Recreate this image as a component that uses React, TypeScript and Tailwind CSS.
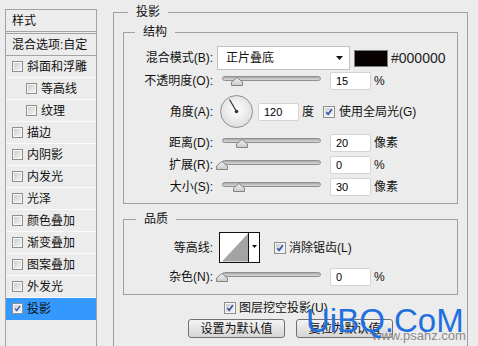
import React from 'react';

const FONT = "font-['Liberation_Sans','Noto_Sans_CJK_SC',sans-serif]";

function Check({ checked, big }: { checked?: boolean; big?: boolean }) {
  return (
    <span
      className={`${big ? 'w-[12px] h-[12px]' : 'w-[11px] h-[11px]'} shrink-0 flex border border-[#8e8f8f] bg-[#f6f6f6] p-[1px]`}
    >
      <span className="relative flex-1 bg-gradient-to-br from-[#cfcfcf] to-[#f3f3f3]">
        {checked && (
          <svg className="absolute inset-0" viewBox="0 0 8 8" width="100%" height="100%">
            <path d="M1.3 4.2 L3.2 6.3 L6.8 1.3" fill="none" stroke="#2b4aa8" strokeWidth="1.5" />
          </svg>
        )}
      </span>
    </span>
  );
}

function Slider({ pos }: { pos: number }) {
  return (
    <div className="relative w-[99px] h-[12px] ml-[9px] shrink-0">
      <div className="mt-[1px] h-[5px] rounded-full border border-[#8f8f8f] bg-gradient-to-b from-[#a9a9a9] to-[#dadada]" />
      <svg className="absolute top-[2px]" style={{ left: pos }} width="12" height="9" viewBox="0 0 12 9">
        <defs>
          <linearGradient id="thumbg" x1="0" y1="0" x2="0" y2="1">
            <stop offset="0" stopColor="#f2f2f2" />
            <stop offset="1" stopColor="#c9c9c9" />
          </linearGradient>
        </defs>
        <path d="M6 0.5 L11.5 5 L11.5 8.5 L0.5 8.5 L0.5 5 Z" fill="url(#thumbg)" stroke="#858585" strokeWidth="1" />
      </svg>
    </div>
  );
}

function Field({ v, ml = 'ml-[9px]' }: { v: string; ml?: string }) {
  return (
    <div
      className={`${ml} w-[41px] h-[18px] shrink-0 bg-white border border-[#d4d4d4] rounded-[2px] pl-[5px] text-[11px] leading-[16px] text-black`}
    >
      {v}
    </div>
  );
}

function Label({ children }: { children: React.ReactNode }) {
  return <div className="w-[89px] shrink-0 text-right text-[12px] leading-[16px] text-[#111]">{children}</div>;
}

function GroupTitle({ children, left }: { children: React.ReactNode; left: string }) {
  return (
    <div className={`absolute -top-[9px] ${left} px-[8px] bg-[#ececec] text-[12px] leading-[16px] text-[#111]`}>
      {children}
    </div>
  );
}

const items: { t: string; nested?: boolean; sel?: boolean }[] = [
  { t: '斜面和浮雕' },
  { t: '等高线', nested: true },
  { t: '纹理', nested: true },
  { t: '描边' },
  { t: '内阴影' },
  { t: '内发光' },
  { t: '光泽' },
  { t: '颜色叠加' },
  { t: '渐变叠加' },
  { t: '图案叠加' },
  { t: '外发光' },
  { t: '投影', sel: true },
];

export default function App() {
  return (
    <div className={`relative flex w-[478px] h-[346px] overflow-hidden bg-[#ececec] ${FONT}`}>
      {/* left panel */}
      <div className="ml-[5px] mt-[9px] w-[92px] shrink-0 flex flex-col border-t border-l border-r border-[#a3a3a3]">
        <div className="h-[22px] border-b border-[#a3a3a3] pl-[6px] flex items-center text-[12px] leading-[16px] text-[#111]">
          样式
        </div>
        <div className="mt-[1px] h-[23px] border-t border-b border-[#a3a3a3] pl-[6px] flex items-center text-[12px] leading-[16px] text-[#111]">
          混合选项:自定
        </div>
        {items.map((it) => (
          <div
            key={it.t}
            className={`h-[22px] flex items-center border-b ${
              it.sel ? 'bg-[#3399ff] border-[#3399ff]' : 'border-[#fafafa]'
            } ${it.nested ? 'pl-[20px]' : 'pl-[6px]'}`}
          >
            <Check checked={it.sel} />
            <span className="ml-[4px] text-[12px] leading-[16px] text-[#111]">{it.t}</span>
          </div>
        ))}
      </div>

      {/* right: 投影 group */}
      <div className="relative ml-[16px] mt-[12px] w-[355px] h-[360px] shrink-0 border border-[#a0a0a0] pl-[9px]">
        <GroupTitle left="left-[14px]">投影</GroupTitle>

        {/* 结构 */}
        <div className="relative mt-[19px] w-[335px] h-[172px] border border-[#a0a0a0] flex flex-col">
          <GroupTitle left="left-[11px]">结构</GroupTitle>

          <div className="mt-[13px] h-[24px] flex items-center">
            <Label>混合模式(B):</Label>
            <div className="ml-[4px] w-[133px] h-[24px] border border-[#c2c2c2] bg-white flex items-center justify-between pl-[8px] pr-[6px]">
              <span className="text-[12px] leading-[16px] text-[#111]">正片叠底</span>
              <svg width="7" height="4" viewBox="0 0 7 4">
                <path d="M0 0 H7 L3.5 4 Z" fill="#111" />
              </svg>
            </div>
            <div className="ml-[4px] w-[34px] h-[17px] border border-[#7d7d7d] bg-[#060000]" />
            <span className="ml-[3px] text-[14px] leading-[16px] text-[#222]">#000000</span>
          </div>

          <div className="h-[21px] flex items-center">
            <Label>不透明度(O):</Label>
            <Slider pos={9} />
            <Field v="15" />
            <span className="ml-[3px] text-[12px] text-[#111]">%</span>
          </div>

          <div className="h-[41px] flex items-center">
            <Label>角度(A):</Label>
            <svg className="ml-[7px] shrink-0" width="33" height="33" viewBox="0 0 33 33">
              <defs>
                <radialGradient id="dialg" cx="0.5" cy="0.45" r="0.55">
                  <stop offset="0" stopColor="#ffffff" />
                  <stop offset="1" stopColor="#dedede" />
                </radialGradient>
              </defs>
              <circle cx="16.5" cy="16.5" r="16" fill="url(#dialg)" stroke="#8f8f8f" strokeWidth="1" />
              <line x1="16.5" y1="16.5" x2="9.5" y2="4.5" stroke="#333" strokeWidth="1.2" />
              <circle cx="16.5" cy="16.5" r="1.8" fill="#333" />
            </svg>
            <Field v="120" ml="ml-[5px]" />
            <span className="ml-[3px] text-[12px] leading-[16px] text-[#111]">度</span>
            <span className="ml-[9px] flex">
              <Check checked big />
            </span>
            <span className="ml-[4px] text-[12px] leading-[16px] text-[#111]">使用全局光(G)</span>
          </div>

          <div className="h-[22px] flex items-center">
            <Label>距离(D):</Label>
            <Slider pos={14} />
            <Field v="20" />
            <span className="ml-[3px] text-[12px] leading-[16px] text-[#111]">像素</span>
          </div>

          <div className="h-[22px] flex items-center">
            <Label>扩展(R):</Label>
            <Slider pos={-6} />
            <Field v="0" />
            <span className="ml-[3px] text-[12px] text-[#111]">%</span>
          </div>

          <div className="h-[22px] flex items-center">
            <Label>大小(S):</Label>
            <Slider pos={11} />
            <Field v="30" />
            <span className="ml-[3px] text-[12px] leading-[16px] text-[#111]">像素</span>
          </div>
        </div>

        {/* 品质 */}
        <div className="relative mt-[15px] w-[335px] h-[76px] border border-[#a0a0a0] flex flex-col">
          <GroupTitle left="left-[12px]">品质</GroupTitle>

          <div className="mt-[12px] h-[31px] flex items-center">
            <Label>等高线:</Label>
            <svg className="ml-[6px] shrink-0" width="41" height="31" viewBox="0 0 41 31">
              <rect x="0.5" y="0.5" width="40" height="30" fill="#fff" stroke="#111" />
              <path d="M3 29.5 L29 1.5 L29 29.5 Z" fill="#a4a4a4" />
              <line x1="29.5" y1="1" x2="29.5" y2="30" stroke="#111" />
              <path d="M33 13 H38 L35.5 16 Z" fill="#111" />
            </svg>
            <span className="ml-[14px] flex">
              <Check checked big />
            </span>
            <span className="ml-[3px] text-[12px] leading-[16px] text-[#111]">消除锯齿(L)</span>
          </div>

          <div className="mt-[3px] h-[21px] flex items-center">
            <Label>杂色(N):</Label>
            <Slider pos={-6} />
            <Field v="0" />
            <span className="ml-[3px] text-[12px] text-[#111]">%</span>
          </div>
        </div>

        <div className="mt-[7px] ml-[101px] h-[12px] flex items-center">
          <Check checked big />
          <span className="ml-[3px] text-[12px] leading-[16px] text-[#111]">图层挖空投影(U)</span>
        </div>

        <div className="mt-[5px] ml-[65px] flex gap-[11px]">
          <button className="w-[97px] h-[19px] border border-[#707070] rounded-[3px] bg-gradient-to-b from-[#f4f4f4] to-[#d6d6d6] text-[12px] leading-[16px] text-[#111]">
            设置为默认值
          </button>
          <button className="w-[97px] h-[19px] border border-[#707070] rounded-[3px] bg-gradient-to-b from-[#f4f4f4] to-[#d6d6d6] text-[12px] leading-[16px] text-[#111]">
            复位为默认值
          </button>
        </div>
      </div>

      {/* watermark */}
      <div className="absolute left-[372px] top-[329px] text-[13px] leading-[14px] text-[#8a8a8a] font-['Liberation_Sans',sans-serif]">
        www.psahz.com
      </div>
      <div className="absolute left-[306px] top-[304px] text-[33px] leading-none text-[#1f6fe0] font-['Liberation_Sans',sans-serif]">
        UiBQ.CoM
      </div>
    </div>
  );
}
